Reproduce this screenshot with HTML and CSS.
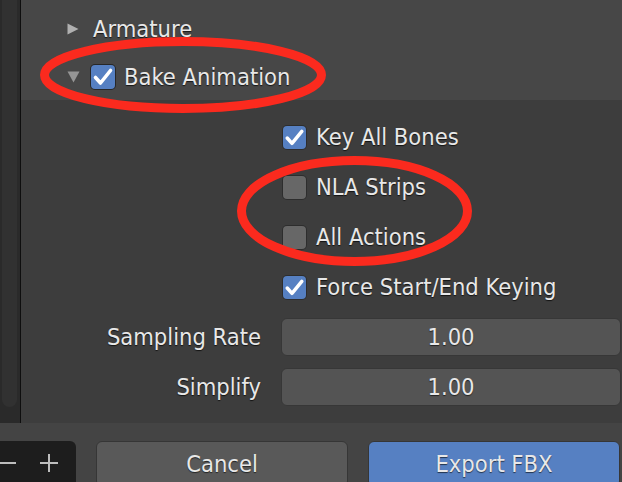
FILE: index.html
```html
<!DOCTYPE html>
<html>
<head>
<meta charset="utf-8">
<link rel="stylesheet" href="styles.css">
</head>
<body>
<div class="app">
  <div class="main">
    <div class="sidebar"><div class="thumb"></div></div>
    <div class="panel">
      <div class="header">
        <div class="hrow first">
          <svg class="tri" width="12" height="12" viewBox="0 0 12 12"><path d="M0.5 0.5 L11.5 6 L0.5 11.5 Z" fill="#b0b0b0"/></svg>
          <span class="htext gap14">Armature</span>
        </div>
        <div class="hrow second">
          <svg class="tri" width="13" height="12" viewBox="0 0 13 12"><path d="M0.5 0.5 L12.5 0.5 L6.5 11.5 Z" fill="#959595"/></svg>
          <span class="cb on big"><svg viewBox="0 0 24 24"><path d="M4.5 12.5 L9.5 18 L19.5 5.5" fill="none" stroke="#fff" stroke-width="3.6" stroke-linecap="round" stroke-linejoin="round"/></svg></span>
          <span class="htext">Bake Animation</span>
        </div>
      </div>
      <div class="content">
        <div class="grid">
          <div class="label"></div>
          <div class="check"><span class="cb on"><svg viewBox="0 0 23 23"><path d="M4.2 12 L9 17.3 L18.8 5.4" fill="none" stroke="#fff" stroke-width="3.5" stroke-linecap="round" stroke-linejoin="round"/></svg></span><span>Key All Bones</span></div>
          <div class="label"></div>
          <div class="check"><span class="cb"></span><span>NLA Strips</span></div>
          <div class="label"></div>
          <div class="check"><span class="cb"></span><span>All Actions</span></div>
          <div class="label"></div>
          <div class="check"><span class="cb on"><svg viewBox="0 0 23 23"><path d="M4.2 12 L9 17.3 L18.8 5.4" fill="none" stroke="#fff" stroke-width="3.5" stroke-linecap="round" stroke-linejoin="round"/></svg></span><span>Force Start/End Keying</span></div>
          <div class="label">Sampling Rate</div>
          <div class="fieldcell"><div class="field">1.00</div></div>
          <div class="label">Simplify</div>
          <div class="fieldcell"><div class="field">1.00</div></div>
        </div>
      </div>
    </div>
  </div>
  <div class="footer">
    <div class="zoombox">
      <svg width="86" height="41" viewBox="0 0 86 41"><path d="M0 22 H26" stroke="#bdbdbd" stroke-width="2"/><path d="M50 22 H68 M59 13 V31" stroke="#bdbdbd" stroke-width="2"/></svg>
    </div>
    <div class="btn cancel">Cancel</div>
    <div class="btn export">Export FBX</div>
  </div>
  <svg class="annot" width="622" height="482" viewBox="0 0 622 482">
    <ellipse cx="183" cy="75" rx="138.5" ry="33.5" fill="none" stroke="#fb2a1e" stroke-width="9"/>
    <ellipse cx="354.5" cy="211" rx="113" ry="50.5" fill="none" stroke="#fb2a1e" stroke-width="9"/>
  </svg>
</div>
</body>
</html>
```
FILE: styles.css
```css
html, body {
  margin: 0;
  padding: 0;
  background: #3d3d3d;
}
body {
  width: 622px;
  height: 482px;
  overflow: hidden;
  font-family: "DejaVu Sans Condensed", "DejaVu Sans", sans-serif;
  font-stretch: condensed;
  font-size: 23.5px;
  color: #e8e8e8;
}
.app {
  position: relative;
  width: 622px;
  height: 482px;
  display: flex;
  flex-direction: column;
}
.main {
  height: 423px;
  display: flex;
}
.sidebar {
  width: 18px;
  background: #2a2a2a;
  border-right: 1px solid #0e0e0e;
  display: flex;
  flex-direction: column;
  justify-content: flex-end;
  padding-left: 2px;
  flex: none;
}
.thumb {
  width: 15px;
  height: 430px;
  margin-bottom: 16px;
  background: #313131;
  border-radius: 0 0 8px 8px;
}
.panel {
  flex: 1;
  display: flex;
  flex-direction: column;
}
.header {
  height: 100px;
  background: #474747;
  padding-left: 46px;
  box-sizing: border-box;
  overflow: hidden;
}
.hrow {
  display: flex;
  align-items: center;
}
.hrow.first {
  height: 48px;
  margin-top: 5px;
}
.hrow.second {
  height: 47px;
}
.tri {
  display: block;
  flex: none;
}
.htext {
  text-shadow: 0 1px 1px rgba(0,0,0,0.7);
}
.gap14 {
  margin-left: 14px;
}
.hrow.second .cb {
  margin-left: 11px;
  margin-right: 9px;
}
.content {
  flex: 1;
  background: #3d3d3d;
  padding-top: 12px;
}
.grid {
  display: grid;
  grid-template-columns: 241px 1fr;
  column-gap: 19px;
  grid-auto-rows: 50px;
  padding-right: 1px;
}
.label {
  display: flex;
  align-items: center;
  justify-content: flex-end;
  padding-right: 1px;
  text-shadow: 0 1px 1px rgba(0,0,0,0.7);
}
.check {
  display: flex;
  align-items: center;
  padding-left: 2px;
  text-shadow: 0 1px 1px rgba(0,0,0,0.7);
}
.check .cb {
  margin-right: 10px;
}
.cb {
  width: 23px;
  height: 23px;
  flex: none;
  border-radius: 4px;
  background: #676767;
  box-shadow: 0 0 0 1px rgba(0,0,0,0.25);
  display: block;
}
.cb.big {
  width: 24px;
  height: 24px;
  box-shadow: 0 0 0 1px rgba(0,0,0,0.45);
}
.cb.on {
  background: #5680c2;
}
.cb svg {
  display: block;
  width: 100%;
  height: 100%;
}
.fieldcell {
  display: flex;
  align-items: center;
}
.field {
  flex: 1;
  height: 38px;
  box-sizing: border-box;
  background: #545454;
  border: 1px solid #373737;
  border-radius: 6px;
  display: flex;
  align-items: center;
  justify-content: center;
  text-shadow: 0 1px 1px rgba(0,0,0,0.6);
}
.footer {
  flex: 1;
  background: #444444;
  display: flex;
  padding-top: 18px;
  box-sizing: border-box;
  align-items: flex-start;
}
.zoombox {
  width: 86px;
  height: 46px;
  margin-left: -10px;
  background: #1d1d1d;
  border-radius: 6px;
  flex: none;
}
.zoombox svg {
  display: block;
}
.btn {
  width: 252px;
  height: 46px;
  box-sizing: border-box;
  border: 1px solid #363636;
  border-radius: 6px;
  margin-left: 20px;
  flex: none;
  display: flex;
  justify-content: center;
  align-items: center;
  text-shadow: 0 1px 1px rgba(0,0,0,0.6);
}
.cancel {
  background: #595959;
}
.export {
  background: #5680c2;
}
.annot {
  position: absolute;
  left: 0;
  top: 0;
  pointer-events: none;
}
```
